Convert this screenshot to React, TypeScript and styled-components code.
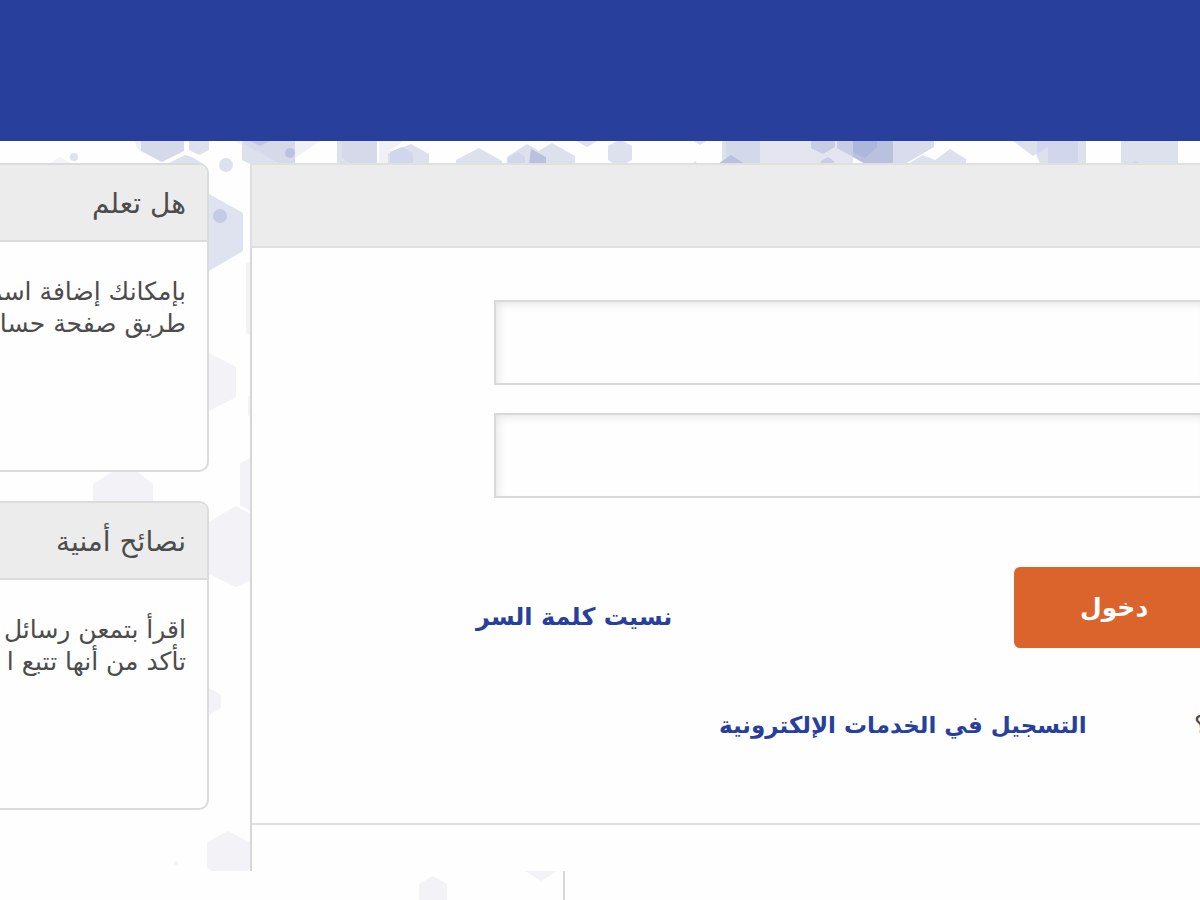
import React from "react";
import styled, { createGlobalStyle } from "styled-components";

const GlobalStyle = createGlobalStyle`
  *, *::before, *::after { box-sizing: border-box; }
  html, body { margin: 0; }
  body {
    background: #fefefe;
    color: #4c4c4c;
    font-family: "DejaVu Sans", Tahoma, sans-serif;
    overflow-x: hidden;
  }
`;

const Header = styled.header`
  height: 141px;
  background: #283f9b;
`;

const Content = styled.div`
  position: relative;
  display: flex;
  align-items: stretch;
  gap: 41px;
  padding-top: 22px;
  overflow: hidden;
`;

const Pattern = styled.svg`
  position: absolute;
  top: 0;
  left: 0;
  z-index: -1;
`;

const Sidebar = styled.aside`
  flex: 0 0 209px;
  min-width: 0;
  display: flex;
  flex-direction: column;
  gap: 29px;
  padding-bottom: 61px;
`;

const Card = styled.section`
  height: 309px;
  overflow: hidden;
  background: #fefefe;
  border: 2px solid #dadbdb;
  border-left: 0;
  border-radius: 0 10px 10px 0;
`;

const CardTitle = styled.h2`
  margin: 0;
  height: 77px;
  padding-right: 21px;
  background: #ececec;
  border-bottom: 2px solid #dadbdb;
  font-size: 28px;
  font-weight: 400;
  line-height: 78px;
  white-space: nowrap;
`;

const CardText = styled.p`
  margin: 0;
  padding: 34px 21px 0 0;
  font-size: 25px;
  line-height: 32px;
  white-space: nowrap;
`;

const Panel = styled.main`
  flex: 1;
  min-width: 0;
  display: flex;
  flex-direction: column;
`;

const PanelHead = styled.div`
  height: 85px;
  background: #ececec;
  border: 2px solid #e0e0e0;
  border-right: 0;
`;

const PanelBody = styled.div`
  flex: 1;
  background: #fefefe;
  border-left: 2px solid #d5d8d8;
`;

const Form = styled.form`
  display: flex;
  flex-direction: column;
  height: 577px;
  padding-top: 52px;
  border-bottom: 2px solid #dddede;
`;

const Field = styled.input`
  height: 85px;
  margin: 0 0 28px 242px;
  padding: 0 20px;
  background: #fefefe;
  border: 2px solid #d9d9d9;
  border-right: 0;
  border-radius: 0;
  box-shadow: inset 4px 4px 8px -2px rgba(0, 0, 0, 0.1);
  font: 400 24px "DejaVu Sans", Tahoma, sans-serif;
  outline: none;
`;

const Row = styled.div<{ $start: number; $top: number }>`
  display: flex;
  align-items: center;
  justify-content: space-between;
  margin-top: ${(p) => p.$top}px;
  padding-left: ${(p) => p.$start}px;
`;

const TextLink = styled.a`
  color: #283f9b;
  font-size: 23px;
  font-weight: 700;
  line-height: 32px;
  text-decoration: none;
  white-space: nowrap;
`;

const ForgotLink = styled(TextLink)`
  padding-top: 18px;
  font-size: 24px;
`;

const Submit = styled.button`
  width: 186px;
  height: 81px;
  padding: 0 52px 0 66px;
  background: #da642c;
  border: 0;
  border-radius: 6px 0 0 6px;
  color: #fff;
  font: 700 25px "DejaVu Sans", Tahoma, sans-serif;
  text-align: left;
`;

const Question = styled.span`
  width: 6px;
  overflow: hidden;
  font-size: 24px;
  line-height: 32px;
  white-space: nowrap;
`;

const FooterStrip = styled.footer`
  height: 29px;
  overflow: hidden;
`;

type Shape = [string, string];

const shapes: Shape[] = [
  ["#f3f3f8", "49,164 60,157 73,164"],
  ["#f0f0f6", "135,141 141,141 141,151 137,148"],
  ["#d5d9ea", "141,141 184,141 184,151 162,162 141,151"],
  ["#dde1ee", "189,141 209,141 209,150 199,155 189,150"],
  ["#dde1ee", "167,164 185,155 192,157 203,164"],
  ["#dfe2ef", "209,194 243,213 243,251 209,271"],
  ["#f0f0f6", "235,141 320,141 295,158 250,150"],
  ["#dde1ee", "242,141 295,141 295,164 250,164 242,160"],
  ["#d5d9ea", "244,141 295,141 295,164 281,164 244,144"],
  ["#bfc6e2", "250,141 270,141 260,146"],
  ["#dde1ee", "337,141 377,141 377,164 337,164"],
  ["#d5d9ea", "342,141 377,141 377,164 352,164 342,158"],
  ["#f0f0f6", "379,141 403,141 388,153 388,164 379,164"],
  ["#dde1ee", "388,164 388,153 411,144 429,154 429,164"],
  ["#d0d6ec", "390,164 390,152 402,147 413,153 413,164"],
  ["#dde1ee", "456,164 456,160 479,148 502,161 502,164"],
  ["#dde1ee", "507,164 507,157 527,144 546,155 546,164"],
  ["#dde1ee", "530,164 530,156 552,143 575,156 575,164"],
  ["#d0d6ec", "508,164 508,158 518,152 525,157 525,164"],
  ["#b9c1df", "529,164 531,149 546,157 546,164"],
  ["#dde1ee", "576,141 597,141 587,147"],
  ["#dde1ee", "608,146 617,141 623,141 632,146 632,160 625,164 614,164 608,160"],
  ["#dde1ee", "694,141 706,141 700,145"],
  ["#dde1ee", "692,164 695,161 698,164"],
  ["#e4e5f0", "760,141 853,141 853,164 760,164"],
  ["#dde1ee", "722,141 760,141 760,164 722,164"],
  ["#d3d8ea", "726,141 760,141 760,164 726,164"],
  ["#b9c1df", "718,164 731,155 745,164"],
  ["#c9cde3", "811,141 835,141 835,147 823,154 811,148"],
  ["#c9cde3", "837,141 853,141 853,157 837,148"],
  ["#c9cde3", "821,164 821,161 828,157 834,161 834,164"],
  ["#b9c1df", "853,141 893,141 893,164 865,164 853,157"],
  ["#adb7dc", "853,141 877,141 877,147 865,158 853,152"],
  ["#d9dcec", "893,141 934,141 934,147 905,164 893,164"],
  ["#dde1ee", "908,164 923,155 935,160 950,149 966,159 966,164"],
  ["#dde1ee", "1013,141 1086,141 1086,164 1040,164 1036,154 1033,156"],
  ["#d1d6ed", "1048,147 1048,164 1074,164 1078,162 1078,141 1037,141 1037,154"],
  ["#dde1ee", "1121,141 1178,141 1178,164 1121,164"],
  ["#cfd3e8", "1130,164 1135,161 1140,164"],
  ["#f2f2f7", "246,264 251,261 251,336 246,333"],
  ["#f2f2f7", "209,353 236,367 236,397 209,411"],
  ["#f2f2f7", "248,397 251,395 251,417 248,415"],
  ["#f2f2f7", "93,502 93,484 112,472 112,470 135,470 153,484 153,502"],
  ["#f2f2f7", "240,463 251,458 251,511 240,505"],
  ["#f2f2f7", "209,522 236,506 251,514 251,580 236,587 209,574"],
  ["#f2f2f7", "209,688 221,695 221,708 209,715"],
  ["#f2f2f7", "207,868 207,842 228,831 251,843 251,868 247,871 212,871"],
];

const circles: [string, number, number, number][] = [
  ["#dde1ee", 74, 157, 4],
  ["#dde1ee", 226, 165, 7],
  ["#c5cbe4", 220, 216, 7],
  ["#bcc3e0", 290, 153, 5],
  ["#f2f2f7", 176, 863, 2],
];

export default function App() {
  return (
    <>
      <GlobalStyle />
      <Header />
      <Content>
        <Pattern width="1200" height="730" viewBox="0 141 1200 730" aria-hidden="true">
          {shapes.map(([fill, points]) => (
            <polygon key={points} fill={fill} points={points} />
          ))}
          {circles.map(([fill, cx, cy, r]) => (
            <circle key={cx} fill={fill} cx={cx} cy={cy} r={r} />
          ))}
        </Pattern>
        <Sidebar dir="rtl" lang="ar">
          <Card>
            <CardTitle>هل تعلم</CardTitle>
            <CardText>
              بإمكانك إضافة اسم
              <br />
              طريق صفحة حساب
            </CardText>
          </Card>
          <Card>
            <CardTitle>نصائح أمنية</CardTitle>
            <CardText>
              اقرأ بتمعن رسائل
              <br />
              تأكد من أنها تتبع ا
            </CardText>
          </Card>
        </Sidebar>
        <Panel lang="ar">
          <PanelHead />
          <PanelBody>
            <Form onSubmit={(e) => e.preventDefault()}>
              <Field type="text" dir="rtl" aria-label="اسم المستخدم" />
              <Field type="password" dir="rtl" aria-label="كلمة السر" />
              <Row $start={224} $top={41}>
                <ForgotLink href="#forgot">نسيت كلمة السر</ForgotLink>
                <Submit type="submit">دخول</Submit>
              </Row>
              <Row $start={467} $top={61}>
                <TextLink href="#register">التسجيل في الخدمات الإلكترونية</TextLink>
                <Question>؟</Question>
              </Row>
            </Form>
          </PanelBody>
        </Panel>
      </Content>
      <FooterStrip>
        <svg width="1200" height="29" viewBox="0 871 1200 29" aria-hidden="true">
          <polygon fill="#f2f2f7" points="419,900 419,884 433,876 447,884 447,900" />
          <polygon fill="#f2f2f7" points="525,871 557,871 541,881" />
          <rect fill="#d5d8d8" x="563" y="871" width="2" height="29" />
        </svg>
      </FooterStrip>
    </>
  );
}
